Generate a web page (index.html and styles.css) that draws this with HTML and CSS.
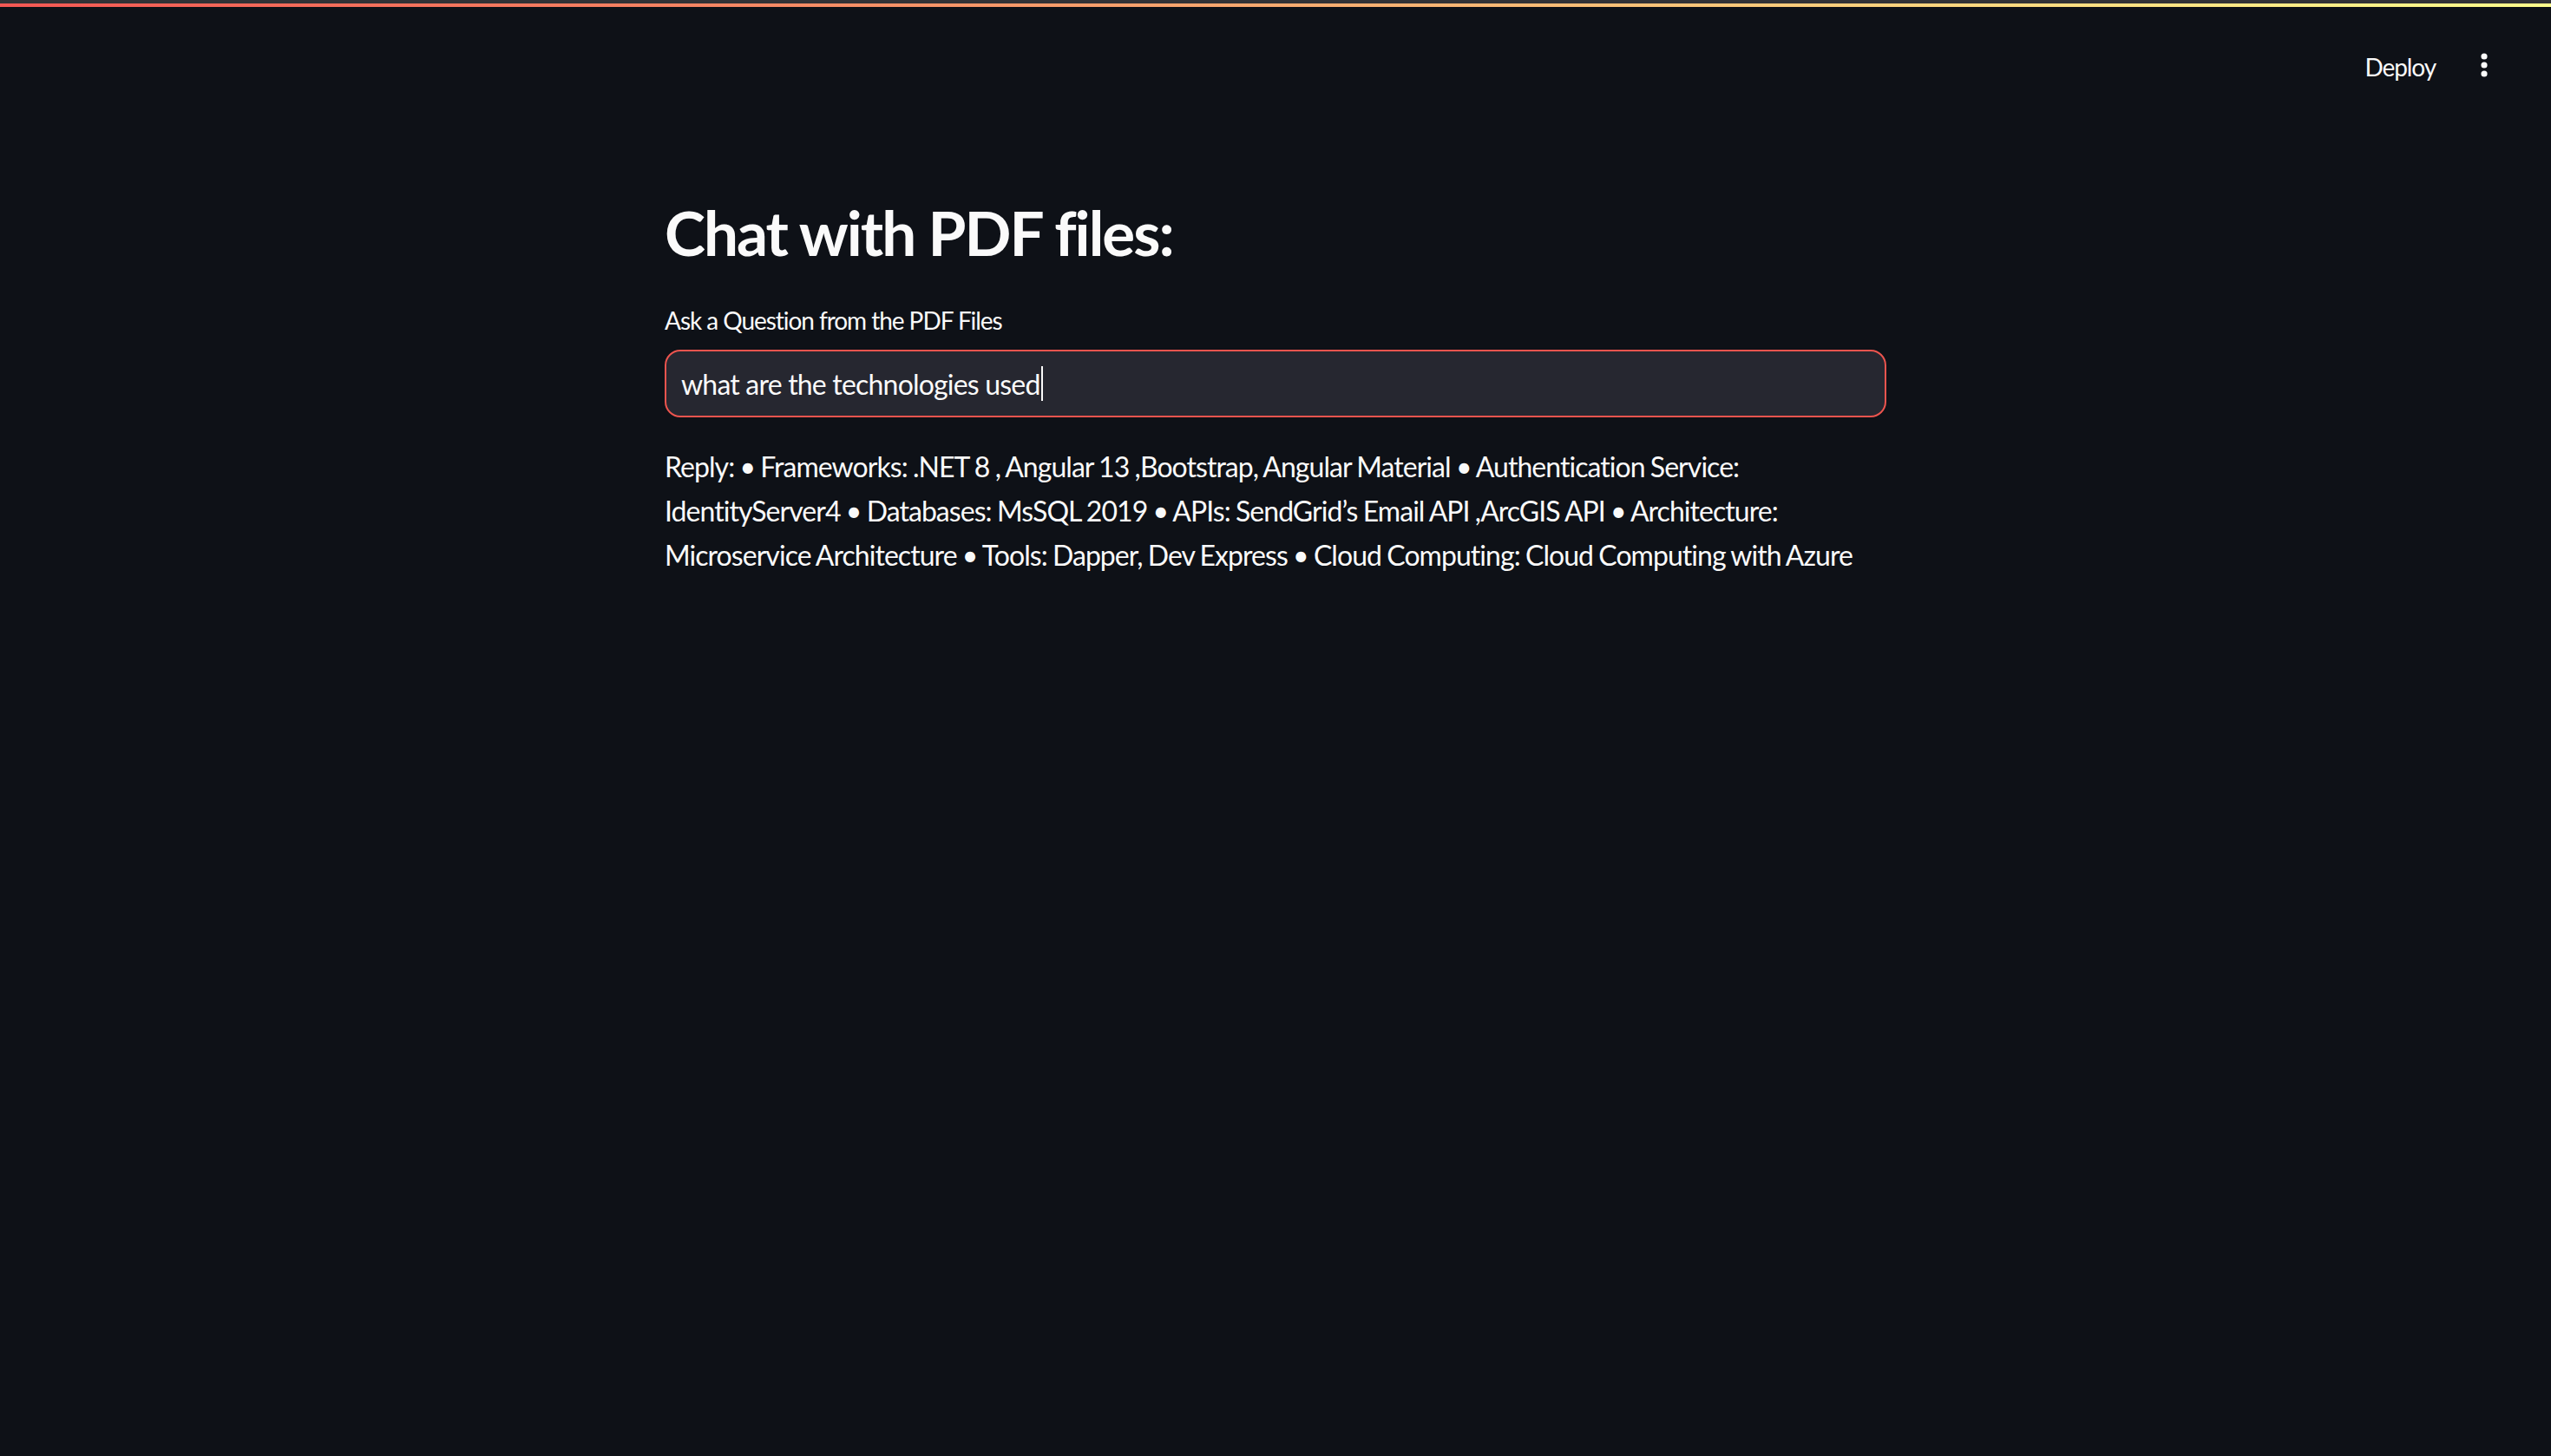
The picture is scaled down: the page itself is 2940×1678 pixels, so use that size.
FILE: index.html
```html
<!DOCTYPE html>
<html lang="en">
<head>
<meta charset="utf-8">
<title>Chat with PDF files</title>
<link rel="stylesheet" href="styles.css">
</head>
<body>
<div class="chrome-line"></div>
<div class="decoration"></div>
<header class="header">
  <button class="deploy">Deploy</button>
  <button class="menu" aria-label="Main menu">
    <svg width="10" height="30" viewBox="0 0 10 30"><circle cx="5" cy="5" r="3.6" fill="#fafafa"/><circle cx="5" cy="15" r="3.6" fill="#fafafa"/><circle cx="5" cy="25" r="3.6" fill="#fafafa"/></svg>
  </button>
</header>
<main class="main">
  <h1 class="title">Chat with PDF files:</h1>
  <label class="label">Ask a Question from the PDF Files</label>
  <div class="input"><span class="input-text">what are the technologies used</span><span class="caret"></span></div>
  <p class="reply">Reply: • Frameworks: .NET 8 , Angular 13 ,Bootstrap, Angular Material • Authentication Service: IdentityServer4 • Databases: MsSQL 2019 • APIs: SendGrid’s Email API ,ArcGIS API • Architecture: Microservice Architecture • Tools: Dapper, Dev Express • Cloud Computing: Cloud Computing with Azure</p>
</main>
</body>
</html>
```

FILE: styles.css
```css
html, body {
  margin: 0;
  padding: 0;
  background: #0e1117;
  color: #fafafa;
  font-family: Lato, "Noto Sans", sans-serif;
  min-height: 100vh;
}
.chrome-line {
  height: 4px;
  background: #323236;
}
.decoration {
  height: 4px;
  background: linear-gradient(90deg, rgb(244, 88, 84), rgb(255, 253, 140));
}
.header {
  height: 136px;
  display: flex;
  align-items: center;
  justify-content: flex-end;
  padding-right: 72px;
  gap: 51px;
}
.deploy {
  background: none;
  border: none;
  color: #fafafa;
  font-family: Lato, sans-serif;
  font-size: 28px;
  letter-spacing: -1.1px;
  padding: 0;
  margin-top: 1px;
}
.menu {
  background: none;
  border: none;
  padding: 0;
  display: flex;
  margin-top: -2px;
}
.main {
  width: 1408px;
  margin: 0 auto;
  display: flex;
  flex-direction: column;
}
.title {
  margin: 81px 0 0 0;
  font-size: 71px;
  font-weight: 700;
  line-height: 86px;
  letter-spacing: -2px;
}
.label {
  margin-top: 36px;
  font-size: 28px;
  line-height: 45px;
  letter-spacing: -1.05px;
}
.input {
  margin-top: 11px;
  height: 74px;
  border: 2px solid #ec544e;
  border-radius: 18px;
  background: #262730;
  display: flex;
  align-items: center;
  padding: 0 17px;
  font-size: 32px;
  letter-spacing: -0.8px;
}
.caret {
  display: inline-block;
  width: 2px;
  height: 40px;
  background: #fafafa;
  margin-left: 1px;
}
.reply {
  margin: 31px 0 0 0;
  font-size: 32px;
  line-height: 51.2px;
  letter-spacing: -0.95px;
  word-spacing: -1px;
}
```
